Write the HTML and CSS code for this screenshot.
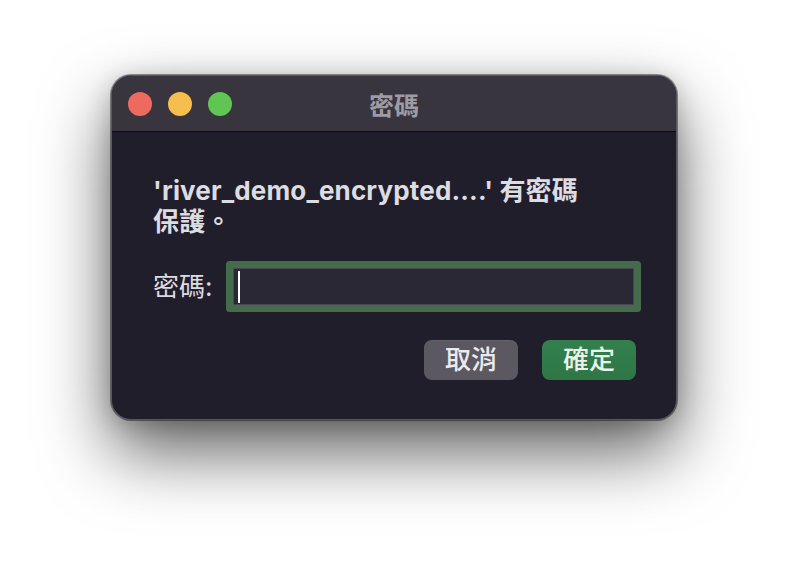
FILE: index.html
```html
<!DOCTYPE html>
<html lang="zh-Hant">
<head>
<meta charset="utf-8">
<title>密碼</title>
<link rel="stylesheet" href="styles.css">
</head>
<body>
<div class="window">
  <div class="titlebar">
    <div class="lights">
      <span class="light red"></span>
      <span class="light yellow"></span>
      <span class="light green"></span>
    </div>
    <div class="title">密碼</div>
  </div>
  <div class="content">
    <p class="message">'river_demo_encrypted....' 有密碼<br>保護。</p>
    <div class="field-row">
      <label class="label">密碼:</label>
      <div class="field"><span class="caret"></span></div>
    </div>
    <div class="buttons">
      <button class="btn cancel">取消</button>
      <button class="btn ok">確定</button>
    </div>
  </div>
</div>
</body>
</html>
```

FILE: styles.css
```css
html, body {
  margin: 0;
  padding: 0;
  background: #ffffff;
}
body {
  width: 788px;
  height: 568px;
  overflow: hidden;
  padding: 75px 0 0 111px;
  box-sizing: border-box;
  font-family: Inter, "Noto Sans CJK TC", "Noto Sans", sans-serif;
}
.window {
  width: 566px;
  height: 345px;
  box-sizing: border-box;
  border: 1px solid #5a5761;
  border-radius: 20px;
  background: #211e2b;
  overflow: hidden;
  box-shadow: 0 0 0 1px rgba(0,0,0,0.4), 0 32px 70px rgba(0,0,0,0.62), 0 4px 24px rgba(0,0,0,0.2);
  display: flex;
  flex-direction: column;
}
.titlebar {
  position: relative;
  height: 55px;
  flex: 0 0 auto;
  background: #38353f;
  border-bottom: 1px solid #0c0b10;
  display: flex;
  align-items: center;
  padding-left: 16px;
}
.lights {
  display: flex;
  gap: 16px;
}
.light {
  width: 24px;
  height: 24px;
  border-radius: 50%;
  display: block;
}
.red { background: #ee6a5f; }
.yellow { background: #f5be4f; }
.green { background: #61c554; }
.title {
  position: absolute;
  left: 0;
  right: 0;
  top: 0;
  bottom: 0;
  display: flex;
  align-items: center;
  justify-content: center;
  font-size: 25px;
  font-weight: 700;
  color: #9e9ba5;
  pointer-events: none;
}
.content {
  flex: 1;
  padding: 43px 40px 0 41px;
  display: flex;
  flex-direction: column;
}
.message {
  margin: 0;
  font-size: 26px;
  line-height: 31px;
  font-weight: 700;
  color: #dddce0;
  letter-spacing: 0.15px;
}
.field-row {
  margin-top: 31px;
  display: flex;
  align-items: center;
}
.label {
  font-size: 26px;
  line-height: 30px;
  color: #dcdbe0;
  width: 80px;
}
.field {
  width: 401px;
  height: 37px;
  box-sizing: border-box;
  background: #2b2835;
  border: 1px solid #4a4752;
  border-radius: 1px;
  box-shadow: 0 0 0 7px #436b4c;
  display: flex;
  align-items: center;
  padding-left: 4px;
}
.caret {
  width: 2px;
  height: 32px;
  background: #ffffff;
  display: block;
}
.buttons {
  margin-top: 35px;
  display: flex;
  justify-content: flex-end;
  gap: 24px;
}
.btn {
  width: 94px;
  height: 40px;
  border: none;
  border-radius: 8px;
  font-family: Inter, "Noto Sans CJK TC", "Noto Sans", sans-serif;
  font-size: 26px;
  font-weight: 500;
  line-height: 40px;
  padding: 0;
  color: #ebeaee;
}
.cancel {
  background: #5b5862;
  box-shadow: inset 0 1px 0 rgba(255,255,255,0.06);
}
.ok {
  background: linear-gradient(#33804e, #2e7646);
  color: #eaf2ea;
}
```
